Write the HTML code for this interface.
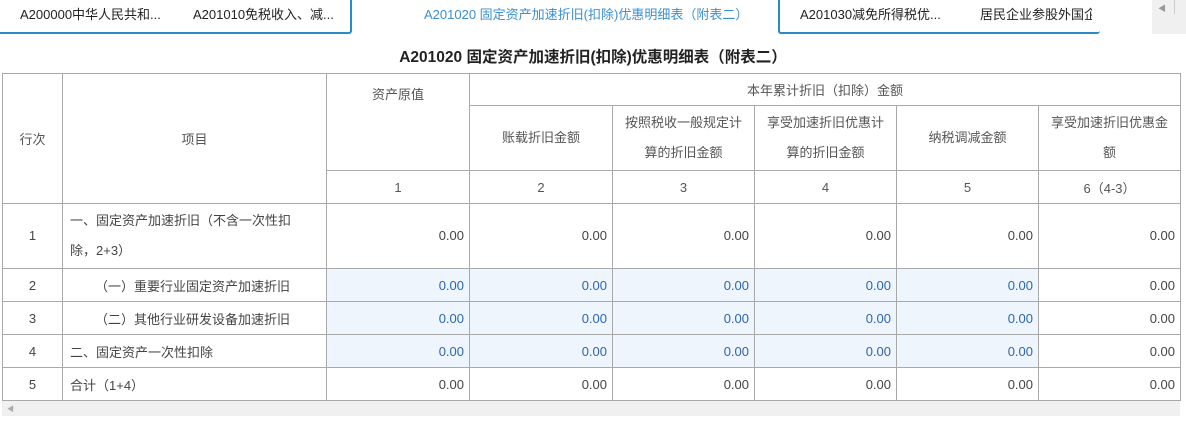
<!DOCTYPE html>
<html><head><meta charset="utf-8"><style>
body{margin:0;width:1186px;height:423px;background:#fff;font-family:"Liberation Sans","Noto Sans CJK SC",sans-serif;font-size:13px;color:#333;overflow:hidden;position:relative}
.tab{position:absolute;top:4px;font-size:13px;color:#222;white-space:nowrap}
.box1{position:absolute;left:-5px;top:-5px;width:353px;height:37px;border:2px solid #2b8cc4;border-radius:3px;border-top:none}
.box2{position:absolute;left:778px;top:-5px;width:320px;height:37px;border:2px solid #2b8cc4;border-radius:3px;border-top:none;border-right:none}
.arr{position:absolute;left:1152px;top:0;width:34px;height:34px;background:#f0f0f0}
.title{position:absolute;top:45px;left:0;width:1186px;text-align:center;font-weight:bold;font-size:15.5px;color:#222}
table{position:absolute;left:2px;top:73px;border-collapse:collapse;table-layout:fixed}
td{border:1px solid #a9a9a9;padding:0 7px;color:#444}
.h{text-align:center;color:#555;padding:0 9px}
.n{text-align:right;padding-right:5px}
.b{background:#eef5fd;color:#2c66b0}
.c{text-align:center}
.sb{position:absolute;left:2px;top:401px;width:1178px;height:15px;background:#f0f0f0}
</style></head><body>
<div class="box1"></div><div class="box2"></div>
<div class="tab" style="left:20px">A200000中华人民共和...</div>
<div class="tab" style="left:193px">A201010免税收入、减...</div>
<div class="tab" style="left:424px;color:#3a8fd0">A201020 固定资产加速折旧(扣除)优惠明细表（附表二）</div>
<div class="tab" style="left:800px">A201030减免所得税优...</div>
<div class="tab" style="left:980px;width:112px;overflow:hidden">居民企业参股外国企业</div>
<div class="arr"><span style="position:absolute;left:6px;top:3px;font-size:8px;color:#999">◀</span><span style="position:absolute;left:22px;top:0;width:12px;height:14px;border-left:1px solid #ccc"></span></div>
<div class="title">A201020 固定资产加速折旧(扣除)优惠明细表（附表二）</div>
<table>
<colgroup><col style="width:60px"><col style="width:264px"><col style="width:143px"><col style="width:143px"><col style="width:142px"><col style="width:142px"><col style="width:142px"><col style="width:142px"></colgroup>
<tr style="height:32px"><td class="h" rowspan="3">行次</td><td class="h" rowspan="3">项目</td><td class="h" rowspan="2" style="vertical-align:top;padding-top:10px">资产原值</td><td class="h" colspan="5">本年累计折旧（扣除）金额</td></tr>
<tr style="height:65px;line-height:30px"><td class="h">账载折旧金额</td><td class="h">按照税收一般规定计算的折旧金额</td><td class="h">享受加速折旧优惠计算的折旧金额</td><td class="h">纳税调减金额</td><td class="h" style="padding:0 6px">享受加速折旧优惠金 额</td></tr>
<tr style="height:33px"><td class="h">1</td><td class="h">2</td><td class="h">3</td><td class="h">4</td><td class="h">5</td><td class="h">6（4-3）</td></tr>
<tr style="height:65px;line-height:30px"><td class="c">1</td><td style="padding-right:14px">一、固定资产加速折旧（不含一次性扣除，2+3）</td><td class="n">0.00</td><td class="n">0.00</td><td class="n">0.00</td><td class="n">0.00</td><td class="n">0.00</td><td class="n">0.00</td></tr>
<tr style="height:33px"><td class="c">2</td><td style="padding-left:32px">（一）重要行业固定资产加速折旧</td><td class="n b">0.00</td><td class="n b">0.00</td><td class="n b">0.00</td><td class="n b">0.00</td><td class="n b">0.00</td><td class="n">0.00</td></tr>
<tr style="height:33px"><td class="c">3</td><td style="padding-left:32px">（二）其他行业研发设备加速折旧</td><td class="n b">0.00</td><td class="n b">0.00</td><td class="n b">0.00</td><td class="n b">0.00</td><td class="n b">0.00</td><td class="n">0.00</td></tr>
<tr style="height:33px"><td class="c">4</td><td>二、固定资产一次性扣除</td><td class="n b">0.00</td><td class="n b">0.00</td><td class="n b">0.00</td><td class="n b">0.00</td><td class="n b">0.00</td><td class="n">0.00</td></tr>
<tr style="height:33px"><td class="c">5</td><td>合计（1+4）</td><td class="n">0.00</td><td class="n">0.00</td><td class="n">0.00</td><td class="n">0.00</td><td class="n">0.00</td><td class="n">0.00</td></tr>
</table>
<div class="sb"><span style="position:absolute;left:5px;top:3px;font-size:7px;color:#aaa">◀</span></div>
</body></html>
